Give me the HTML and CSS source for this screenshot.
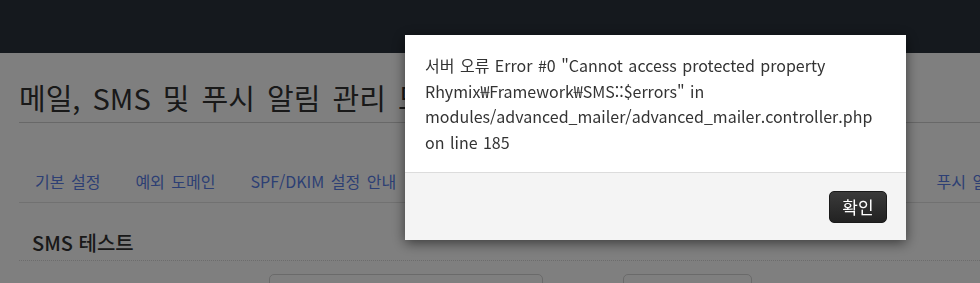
FILE: index.html
```html
<!DOCTYPE html>
<html lang="ko">
<head>
<meta charset="utf-8">
<title>Advanced Mailer</title>
<link rel="stylesheet" href="styles.css">
</head>
<body>
<header class="topbar"></header>
<main class="content">
  <h1 class="page-title">메일, SMS 및 푸시 알림 관리 모듈</h1>
  <nav class="tabs">
    <a class="tab" href="#">기본 설정</a>
    <a class="tab" href="#">예외 도메인</a>
    <a class="tab" href="#">SPF/DKIM 설정 안내</a>
    <a class="tab" href="#">메일 테스트</a>
    <a class="tab" href="#">메일 발송 내역</a>
    <a class="tab" href="#">메일 오류 내역</a>
    <a class="tab" href="#">SMS 테스트</a>
    <a class="tab" href="#">푸시 알림 테스트</a>
  </nav>
  <h2 class="section-title">SMS 테스트</h2>
  <div class="form-row">
    <div class="field field-wide"></div>
    <span class="sep">~</span>
    <div class="field field-narrow"></div>
  </div>
</main>
<div class="overlay"></div>
<div class="dialog" role="alertdialog">
  <div class="dialog-body">서버 오류 Error #0 "Cannot access protected property Rhymix₩Framework₩SMS::$errors" in modules/advanced_mailer/advanced_mailer.controller.php on line 185</div>
  <div class="dialog-footer">
    <button class="btn-ok" type="button">확인</button>
  </div>
</div>
</body>
</html>
```
FILE: styles.css
```css
* { box-sizing: border-box; }
html, body { margin: 0; padding: 0; }
body {
  width: 980px;
  height: 283px;
  overflow: hidden;
  background: #ffffff;
  font-family: "Noto Sans CJK KR", "Noto Sans", sans-serif;
  color: #333;
}
.topbar {
  height: 53px;
  background: #2a323c;
}
.content {
  padding: 0 0 0 19px;
}
.page-title {
  margin: 0;
  padding: 26px 0 0 0;
  height: 70px;
  font-size: 29px;
  font-weight: 400;
  line-height: 37px;
  word-spacing: 4px;
  color: #333;
  border-bottom: 1px solid #d0d0d0;
  white-space: nowrap;
  overflow: hidden;
}
.tabs {
  display: flex;
  gap: 35px;
  padding: 0 0 0 16px;
  margin-top: 47px;
  height: 33px;
  border-bottom: 1px solid #e2e2e2;
  white-space: nowrap;
  overflow: hidden;
}
.tab {
  font-size: 16px;
  line-height: 22px;
  word-spacing: 2px;
  color: #5a7ee8;
  text-decoration: none;
  flex: none;
}
.section-title {
  margin: 0;
  padding: 25px 0 0 13px;
  height: 58px;
  font-size: 20px;
  font-weight: 500;
  line-height: 30px;
  color: #333;
  border-bottom: 1px dotted #d8d8d8;
}
.form-row {
  display: flex;
  align-items: flex-start;
  padding: 13px 0 0 250px;
}
.field {
  height: 34px;
  border: 1px solid #d4d4d4;
  border-radius: 5px;
  background: #fff;
}
.field-wide { width: 274px; }
.field-narrow { width: 129px; }
.sep {
  width: 80px;
  text-align: center;
  font-size: 14px;
  line-height: 18px;
  color: #333;
  padding-top: 4px;
}
.overlay {
  position: fixed;
  inset: 0;
  background: rgba(0, 0, 0, 0.5);
}
.dialog {
  position: fixed;
  left: 405px;
  top: 35px;
  width: 501px;
  background: #fff;
  box-shadow: 0 3px 12px rgba(0, 0, 0, 0.55);
}
.dialog-body {
  padding: 18px 20px 17px 20px;
  font-size: 16px;
  line-height: 25.5px;
  word-spacing: 1px;
  color: #333;
  height: 137px;
}
.dialog-footer {
  height: 68px;
  background: #f4f4f4;
  border-top: 1px solid #dcdcdc;
  display: flex;
  justify-content: flex-end;
  align-items: flex-start;
  padding: 18px 19px 0 0;
}
.btn-ok {
  width: 58px;
  height: 32px;
  border: 1px solid #1a1a1a;
  border-radius: 5px;
  background: linear-gradient(#3a3a3a, #222);
  color: #fff;
  font-family: "Noto Sans CJK KR", sans-serif;
  font-size: 17px;
  line-height: 28px;
  padding: 0;
}
```
